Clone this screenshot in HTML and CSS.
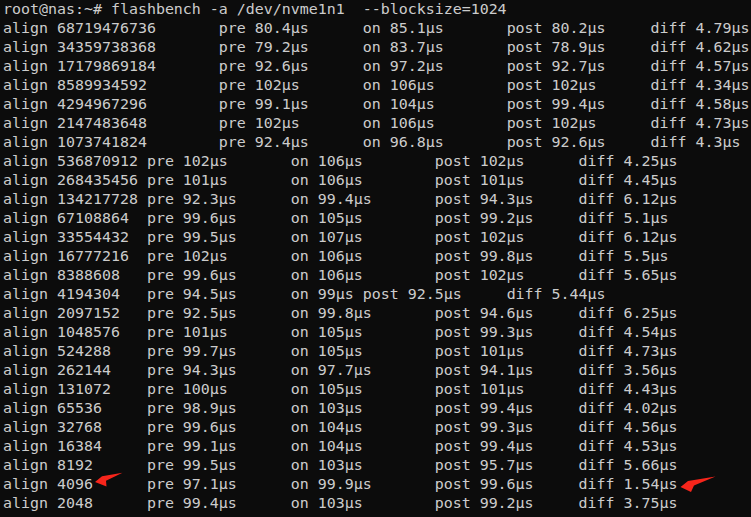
FILE: index.html
```html
<!DOCTYPE html>
<html lang="en">
<head>
<meta charset="utf-8">
<title>flashbench</title>
<link rel="stylesheet" href="styles.css">
</head>
<body>
<main class="terminal">
<pre class="output">root@nas:~# flashbench -a /dev/nvme1n1  --blocksize=1024
align 68719476736	pre 80.4µs	on 85.1µs	post 80.2µs	diff 4.79µs
align 34359738368	pre 79.2µs	on 83.7µs	post 78.9µs	diff 4.62µs
align 17179869184	pre 92.6µs	on 97.2µs	post 92.7µs	diff 4.57µs
align 8589934592	pre 102µs	on 106µs	post 102µs	diff 4.34µs
align 4294967296	pre 99.1µs	on 104µs	post 99.4µs	diff 4.58µs
align 2147483648	pre 102µs	on 106µs	post 102µs	diff 4.73µs
align 1073741824	pre 92.4µs	on 96.8µs	post 92.6µs	diff 4.3µs
align 536870912	pre 102µs	on 106µs	post 102µs	diff 4.25µs
align 268435456	pre 101µs	on 106µs	post 101µs	diff 4.45µs
align 134217728	pre 92.3µs	on 99.4µs	post 94.3µs	diff 6.12µs
align 67108864	pre 99.6µs	on 105µs	post 99.2µs	diff 5.1µs
align 33554432	pre 99.5µs	on 107µs	post 102µs	diff 6.12µs
align 16777216	pre 102µs	on 106µs	post 99.8µs	diff 5.5µs
align 8388608	pre 99.6µs	on 106µs	post 102µs	diff 5.65µs
align 4194304	pre 94.5µs	on 99µs post 92.5µs	diff 5.44µs
align 2097152	pre 92.5µs	on 99.8µs	post 94.6µs	diff 6.25µs
align 1048576	pre 101µs	on 105µs	post 99.3µs	diff 4.54µs
align 524288	pre 99.7µs	on 105µs	post 101µs	diff 4.73µs
align 262144	pre 94.3µs	on 97.7µs	post 94.1µs	diff 3.56µs
align 131072	pre 100µs	on 105µs	post 101µs	diff 4.43µs
align 65536	pre 98.9µs	on 103µs	post 99.4µs	diff 4.02µs
align 32768	pre 99.6µs	on 104µs	post 99.3µs	diff 4.56µs
align 16384	pre 99.1µs	on 104µs	post 99.4µs	diff 4.53µs
align 8192	pre 99.5µs	on 103µs	post 95.7µs	diff 5.66µs
align 4096	pre 97.1µs	on 99.9µs	post 99.6µs	diff 1.54µs
align 2048	pre 99.4µs	on 103µs	post 99.2µs	diff 3.75µs</pre>
<svg class="marks" width="751" height="517" viewBox="0 0 751 517" aria-hidden="true">
<polygon class="arrow" points="95,482 102,476.3 122.5,472.8 106,480.8 106.5,486.5"/>
<polygon class="arrow" points="680.5,487 688,481 715.5,476.5 694,485.5 691,492"/>
</svg>
</main>
</body>
</html>
```
FILE: styles.css
```css
html, body {
  margin: 0;
  padding: 0;
  background: #0c0c0c;
}
body {
  width: 751px;
  height: 517px;
  overflow: hidden;
}
.terminal {
  position: relative;
  width: 751px;
  height: 517px;
  overflow: hidden;
  background: #0c0c0c;
}
.output {
  margin: 0;
  padding: 0 0 0 3px;
  font-family: "DejaVu Sans Mono", "Liberation Mono", monospace;
  font-size: 14.95px;
  line-height: 19px;
  color: #cccccc;
  tab-size: 8;
  -moz-tab-size: 8;
  white-space: pre;
}
.marks {
  position: absolute;
  left: 0;
  top: 0;
  pointer-events: none;
}
.arrow {
  fill: #f7251b;
}
```
